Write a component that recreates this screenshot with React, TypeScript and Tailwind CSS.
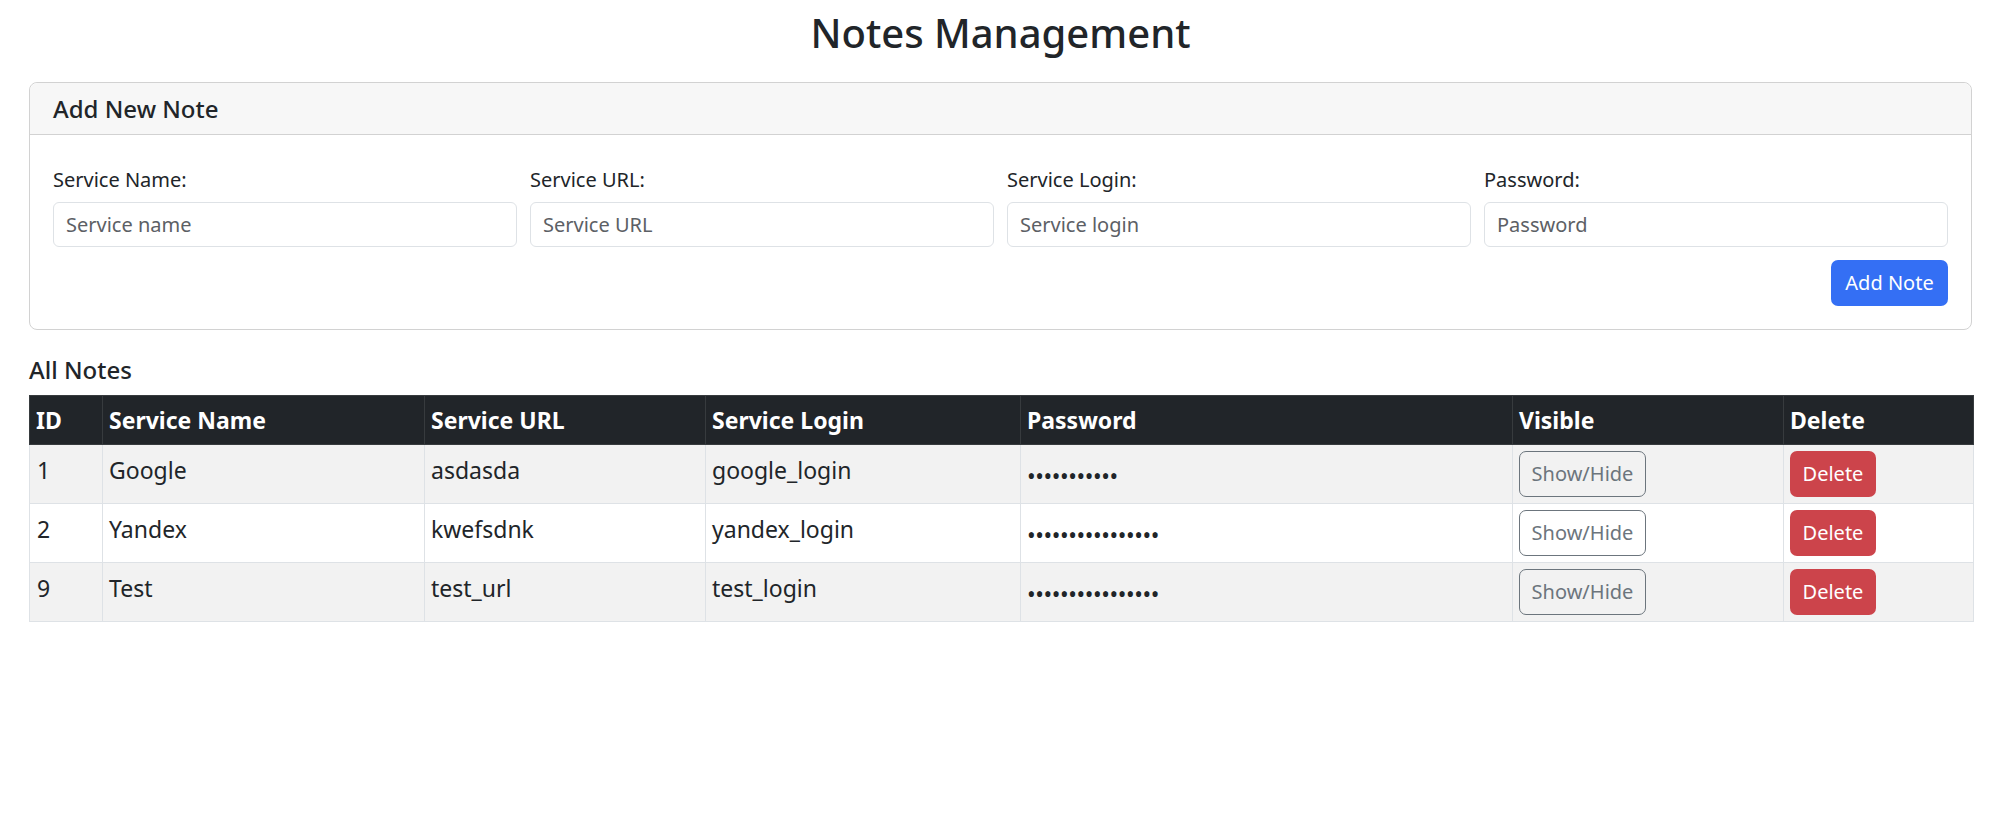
import { useState } from "react";

interface Note {
	id: number;
	name: string;
	url: string;
	login: string;
	password: string;
}

const notes: Note[] = [
	{ id: 1, name: "Google", url: "asdasda", login: "google_login", password: "xxxxxxxxxxx" },
	{ id: 2, name: "Yandex", url: "kwefsdnk", login: "yandex_login", password: "xxxxxxxxxxxxxxxx" },
	{ id: 9, name: "Test", url: "test_url", login: "test_login", password: "xxxxxxxxxxxxxxxx" },
];

const fields = [
	{ label: "Service Name:", placeholder: "Service name" },
	{ label: "Service URL:", placeholder: "Service URL" },
	{ label: "Service Login:", placeholder: "Service login" },
	{ label: "Password:", placeholder: "Password" },
];

const columns = [
	{ title: "ID", width: "w-[73px]" },
	{ title: "Service Name", width: "w-[322px]" },
	{ title: "Service URL", width: "w-[281px]" },
	{ title: "Service Login", width: "w-[315px]" },
	{ title: "Password", width: "w-[492px]" },
	{ title: "Visible", width: "w-[271px]" },
	{ title: "Delete", width: "w-[190px]" },
];

export default function App() {
	const [visible, setVisible] = useState<Record<number, boolean>>({});

	return (
		<div className="min-h-screen bg-white pr-[33px] pl-[29px] font-['Noto_Sans',sans-serif] text-[#212529]">
			<h1 className="pt-[9px] text-center font-medium text-[40px] leading-[48px]">
				Notes Management
			</h1>

			{/* Add form */}
			<div className="mt-[25px] rounded-[8px] border border-[#d2d2d2]">
				<div className="flex h-[52px] items-center rounded-t-[8px] border-[#d2d2d2] border-b bg-[#f7f7f7] px-[23px]">
					<h5 className="font-medium text-[24px] leading-[30px]">Add New Note</h5>
				</div>
				<div className="px-[23px] pt-[30px] pb-[23px]">
					<div className="grid grid-cols-4 gap-x-[13px]">
						{fields.map((f) => (
							<div key={f.label} className="flex flex-col">
								<label className="mb-[7px] text-[20px] leading-[30px]">{f.label}</label>
								<input
									type={f.label === "Password:" ? "password" : "text"}
									placeholder={f.placeholder}
									className="h-[45px] rounded-[6px] border border-[#dee2e6] px-[12px] text-[20px] outline-none placeholder:text-[#5c6065]"
								/>
							</div>
						))}
					</div>
					<div className="mt-[13px] flex justify-end">
						<button className="flex h-[46px] w-[117px] items-center justify-center rounded-[7px] bg-[#346ff4] text-[20px] text-white">
							Add Note
						</button>
					</div>
				</div>
			</div>

			{/* Notes table */}
			<h5 className="mt-[25px] mb-[10px] font-medium text-[24px] leading-[30px]">All Notes</h5>
			<table className="w-full table-fixed border-collapse text-[23px] leading-[36px]">
				<colgroup>
					{columns.map((c) => (
						<col key={c.title} className={c.width} />
					))}
				</colgroup>
				<thead>
					<tr className="bg-[#212529] text-white">
						{columns.map((c) => (
							<th
								key={c.title}
								className="h-[49px] border border-[#373b3e] px-[6px] pt-[6px] pb-[6px] text-left align-top font-bold"
							>
								{c.title}
							</th>
						))}
					</tr>
				</thead>
				<tbody>
					{notes.map((n, i) => (
						<tr key={n.id} className={i % 2 === 0 ? "bg-[#f2f2f2]" : "bg-white"}>
							<td className="border border-[#dee2e6] px-[7px] pt-[7px] pb-[6px] align-top">{n.id}</td>
							<td className="border border-[#dee2e6] px-[6px] pt-[7px] pb-[6px] align-top">{n.name}</td>
							<td className="border border-[#dee2e6] px-[6px] pt-[7px] pb-[6px] align-top">{n.url}</td>
							<td className="border border-[#dee2e6] px-[6px] pt-[7px] pb-[6px] align-top">{n.login}</td>
							<td className="border border-[#dee2e6] px-[6px] pt-[13px] pb-[6px] align-top tracking-[-0.4px]">
								{visible[n.id] ? n.password : "•".repeat(n.password.length)}
							</td>
							<td className="border border-[#dee2e6] px-[6px] pt-[6px] pb-[6px] align-top">
								<button
									onClick={() => setVisible((v) => ({ ...v, [n.id]: !v[n.id] }))}
									className="flex h-[46px] w-[127px] items-center justify-center rounded-[7px] border border-[#6c757d] text-[20px] text-[#6c757d]"
								>
									Show/Hide
								</button>
							</td>
							<td className="border border-[#dee2e6] px-[6px] pt-[6px] pb-[6px] align-top">
								<button className="flex h-[46px] w-[86px] items-center justify-center rounded-[7px] bg-[#cc444b] text-[20px] text-white">
									Delete
								</button>
							</td>
						</tr>
					))}
				</tbody>
			</table>
		</div>
	);
}
